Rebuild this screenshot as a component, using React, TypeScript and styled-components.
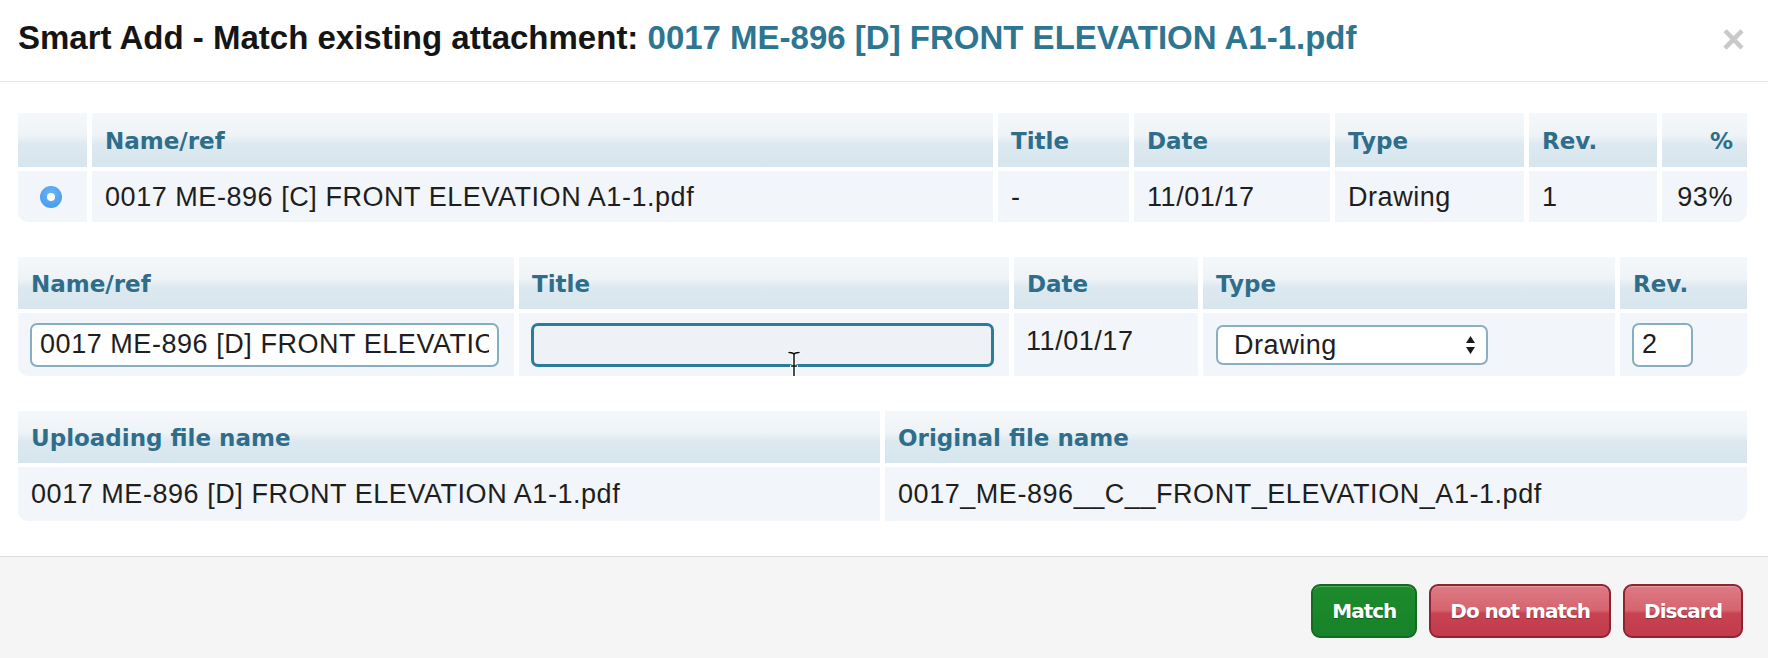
import styled, { createGlobalStyle } from 'styled-components'

const GlobalStyle = createGlobalStyle`
  html, body {
    margin: 0;
    padding: 0;
    background: #ffffff;
  }
  body {
    font-family: "Liberation Sans", Arial, Helvetica, sans-serif;
    color: #1e1e1e;
  }
`

const IBeam = () => (
  <svg width="14" height="30" viewBox="0 0 14 30">
    <path
      d="M2 1.5 Q7 1.5 7 4 Q7 1.5 12 1.5 M7 4 V26 M2 28.5 Q7 28.5 7 26 Q7 28.5 12 28.5 M4.5 15 H9.5"
      fill="none"
      stroke="#ffffff"
      strokeWidth="3.2"
      strokeLinecap="round"
    />
    <path
      d="M2 1.5 Q7 1.5 7 4 Q7 1.5 12 1.5 M7 4 V26 M2 28.5 Q7 28.5 7 26 Q7 28.5 12 28.5 M4.5 15 H9.5"
      fill="none"
      stroke="#111"
      strokeWidth="1.5"
      strokeLinecap="round"
    />
  </svg>
)

const SelectArrows = () => (
  <svg width="11" height="20" viewBox="0 0 11 20">
    <path d="M5.5 1 L10 8 H1 Z" fill="#1a1a1a" />
    <path d="M5.5 19 L10 12 H1 Z" fill="#1a1a1a" />
  </svg>
)

const App = () => {
  return (
    <>
      <GlobalStyle />
      <Modal>
        <Header>
          <Title>
            Smart Add - Match existing attachment: <Highlight>0017 ME-896 [D] FRONT ELEVATION A1-1.pdf</Highlight>
          </Title>
          <Close>×</Close>
        </Header>

        <Body>
          <Grid $cols="69px 901px 131px 196px 189px 128px 85px" $rows="54px 51px">
            <HeadCell />
            <HeadCell>Name/ref</HeadCell>
            <HeadCell>Title</HeadCell>
            <HeadCell>Date</HeadCell>
            <HeadCell>Type</HeadCell>
            <HeadCell>Rev.</HeadCell>
            <HeadCell $align="right">%</HeadCell>

            <Cell $align="center">
              <Radio />
            </Cell>
            <Cell>0017 ME-896 [C] FRONT ELEVATION A1-1.pdf</Cell>
            <Cell>-</Cell>
            <Cell>11/01/17</Cell>
            <Cell>Drawing</Cell>
            <Cell>1</Cell>
            <Cell $align="right">93%</Cell>
          </Grid>

          <Grid $cols="496px 490px 184px 412px 127px" $rows="52px 63px">
            <HeadCell>Name/ref</HeadCell>
            <HeadCell>Title</HeadCell>
            <HeadCell>Date</HeadCell>
            <HeadCell>Type</HeadCell>
            <HeadCell>Rev.</HeadCell>

            <Cell>
              <TextInput defaultValue="0017 ME-896 [D] FRONT ELEVATION A1-1.pdf" />
            </Cell>
            <Cell>
              <TextInput $focused defaultValue="" />
              <Pointer>
                <IBeam />
              </Pointer>
            </Cell>
            <Cell $top>11/01/17</Cell>
            <Cell>
              <Select>
                <span>Drawing</span>
                <SelectArrows />
              </Select>
            </Cell>
            <Cell>
              <RevInput defaultValue="2" />
            </Cell>
          </Grid>

          <Grid $cols="1fr 1fr" $rows="52px 54px">
            <HeadCell>Uploading file name</HeadCell>
            <HeadCell>Original file name</HeadCell>
            <Cell>0017 ME-896 [D] FRONT ELEVATION A1-1.pdf</Cell>
            <Cell>0017_ME-896__C__FRONT_ELEVATION_A1-1.pdf</Cell>
          </Grid>
        </Body>

        <Footer>
          <Button $variant="success">Match</Button>
          <Button $variant="danger">Do not match</Button>
          <Button $variant="danger">Discard</Button>
        </Footer>
      </Modal>
    </>
  )
}

export default App

const Modal = styled.div`
  display: flex;
  flex-direction: column;
  height: 658px;
  background: #ffffff;
`

const Header = styled.div`
  display: flex;
  align-items: center;
  justify-content: space-between;
  height: 82px;
  padding: 0 23px 6px 18px;
  box-sizing: border-box;
  border-bottom: 1px solid #e6e6e6;
`

const Title = styled.h3`
  margin: 0;
  font-size: 33px;
  font-weight: 700;
  color: #151515;
  white-space: nowrap;
`

const Highlight = styled.span`
  color: #2d7591;
`

const Close = styled.span`
  font-size: 40px;
  font-weight: 700;
  line-height: 1;
  color: #c9c9c9;
  margin-top: 2px;
`

const Body = styled.div`
  display: flex;
  flex-direction: column;
  gap: 35px;
  padding: 31px 21px 35px 18px;
`

const Grid = styled.div<{ $cols: string; $rows: string }>`
  display: grid;
  grid-template-columns: ${(p) => p.$cols};
  grid-template-rows: ${(p) => p.$rows};
  column-gap: 5px;
  row-gap: 4px;
  border-radius: 0 0 10px 10px;
  overflow: hidden;
`

const HeadCell = styled.div<{ $align?: 'left' | 'right' }>`
  display: flex;
  align-items: center;
  justify-content: ${(p) => (p.$align === 'right' ? 'flex-end' : 'flex-start')};
  padding: 2px 14px 0 13px;
  background: linear-gradient(
    to bottom,
    #f5f8fa 0%,
    #eef3f7 42%,
    #dde9f0 58%,
    #d6e5ee 100%
  );
  font-family: "DejaVu Sans", Verdana, sans-serif;
  font-size: 23px;
  font-weight: 700;
  color: #2f6e8a;
  white-space: nowrap;
`

const Cell = styled.div<{ $align?: 'left' | 'right' | 'center'; $top?: boolean }>`
  position: relative;
  display: flex;
  align-items: ${(p) => (p.$top ? 'flex-start' : 'center')};
  justify-content: ${(p) =>
    p.$align === 'right' ? 'flex-end' : p.$align === 'center' ? 'center' : 'flex-start'};
  padding: ${(p) => (p.$top ? '12px 14px 0 12px' : '0 14px 0 13px')};
  background: #f2f5f9;
  font-size: 27px;
  letter-spacing: 0.55px;
  line-height: 32px;
  color: #1e1e1e;
  white-space: nowrap;
  overflow: hidden;
`

const Radio = styled.span`
  position: relative;
  display: block;
  width: 22px;
  height: 22px;
  border-radius: 50%;
  background: radial-gradient(circle at 50% 35%, #6db4f7 0%, #3f95ea 100%);
  margin-left: -2px;

  &::after {
    content: '';
    position: absolute;
    left: 7px;
    top: 7px;
    width: 8px;
    height: 8px;
    border-radius: 50%;
    background: #ffffff;
  }
`

const TextInput = styled.input<{ $focused?: boolean }>`
  width: 100%;
  height: 44px;
  box-sizing: border-box;
  margin: 0 -1px;
  padding: 0 8px;
  border: ${(p) => (p.$focused ? '3px solid #2b7c99' : '2px solid #86aec3')};
  border-radius: 7px;
  background: ${(p) => (p.$focused ? '#eef2f6' : '#ffffff')};
  font-family: "Liberation Sans", Arial, sans-serif;
  font-size: 27px;
  letter-spacing: 0.55px;
  color: #1e1e1e;
  outline: none;
`

const RevInput = styled(TextInput)`
  width: 61px;
  flex: none;
`

const Select = styled.div`
  display: flex;
  align-items: center;
  justify-content: space-between;
  width: 272px;
  height: 40px;
  box-sizing: border-box;
  padding: 0 10px 0 16px;
  border: 2px solid #8aafc3;
  border-radius: 7px;
  background: #ffffff;
  font-size: 27px;
  letter-spacing: 0.55px;
`

const Pointer = styled.span`
  position: absolute;
  left: 268px;
  top: 38px;
  display: block;
  line-height: 0;
`

const Footer = styled.div`
  flex: 1;
  display: flex;
  align-items: flex-start;
  justify-content: flex-end;
  gap: 12px;
  padding: 27px 25px 0 0;
  background: #f5f5f5;
  border-top: 1px solid #dedede;
`

const Button = styled.button<{ $variant: 'success' | 'danger' }>`
  height: 54px;
  padding: 0 19px;
  border-radius: 9px;
  border: 2px solid ${(p) => (p.$variant === 'success' ? '#146b22' : '#8c2431')};
  background: ${(p) =>
    p.$variant === 'success'
      ? 'linear-gradient(to bottom, #1d8c2c 0%, #17822a 100%)'
      : 'linear-gradient(to bottom, #dd7a84 0%, #d5656f 48%, #c84352 55%, #c13b4a 100%)'};
  box-shadow: inset 0 1px 0 rgba(255, 255, 255, 0.25);
  font-family: "DejaVu Sans", Verdana, sans-serif;
  font-size: 20px;
  font-weight: 700;
  letter-spacing: -1px;
  color: #ffffff;
  text-shadow: 0 1px 1px rgba(0, 0, 0, 0.3);
  cursor: pointer;
`
